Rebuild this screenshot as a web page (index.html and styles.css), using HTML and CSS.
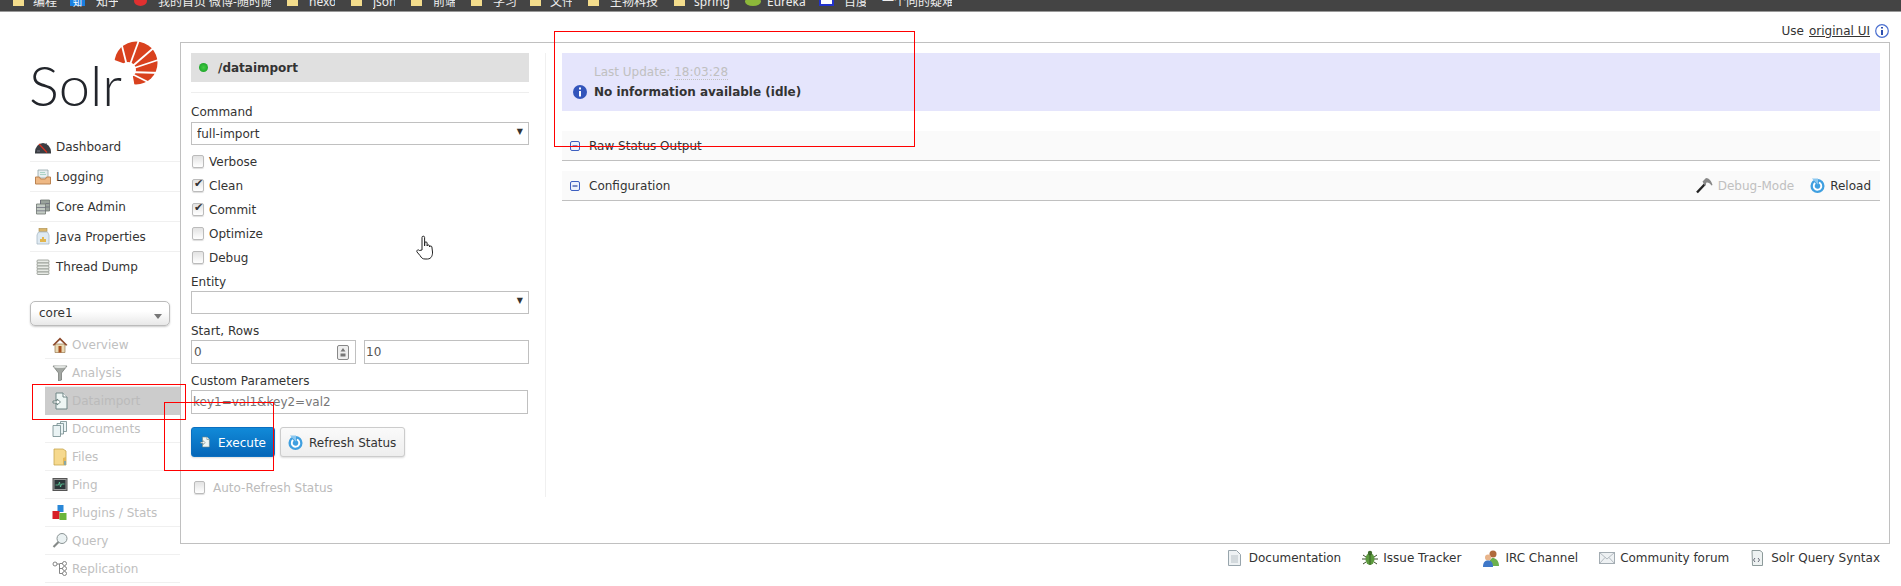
FILE: index.html
```html
<!DOCTYPE html>
<html lang="en">
<head>
    <meta charset="UTF-8">
    <meta name="viewport" content="width=device-width, initial-scale=1.0">
    <title>Solr Admin</title>
    <link rel="stylesheet" href="styles.css">
</head>

<body>
    <svg class="defs" width="0" height="0">
        <symbol id="i-import" viewBox="0 0 16 18">
            <path d="M4 1h7l4 4v12H4z" fill="#eef6f4" stroke="#6f8585"/>
            <path d="M11 1v4h4" fill="#fff" stroke="#6f8585"/>
            <path d="M1 9h4V7l3.500 3L5 13v-2H1z" fill="#fff" stroke="#55706c" stroke-width=".8"/>
        </symbol>
        <symbol id="i-refresh" viewBox="0 0 16 16">
            <circle cx="8" cy="8.500" r="7.500" fill="#3f9fe0"/>
            <path d="M9.500 4.800a4 4 0 1 1-4 .6" fill="none" stroke="#fff" stroke-width="2"/>
            <path d="M2 0.500h6.500v6.500z" fill="#8cc8f0"/>
        </symbol>
        <symbol id="i-minus" viewBox="0 0 10 10">
            <rect x=".5" y=".5" width="9" height="9" rx="1.500" fill="#eef2fc" stroke="#3d5fc0"/>
            <path d="M2.500 5h5" stroke="#2a46a0" stroke-width="1.200"/>
        </symbol>
    </svg>

    <div class="bookmarks">
        <div class="bookmarks-row">
            <span class="folder"></span><span class="bm w26 tight near">编程</span>
            <span class="zhi">知</span><span class="bm w22">知乎</span>
            <span class="weibo"></span><span class="bm w113">我的首页 微博-随时随地</span>
            <span class="folder"></span><span class="bm w26">hexo</span>
            <span class="folder"></span><span class="bm w22">json</span>
            <span class="folder"></span><span class="bm w22">前端</span>
            <span class="folder"></span><span class="bm w26 near">学习</span>
            <span class="folder"></span><span class="bm w22 tight">文件</span>
            <span class="folder"></span><span class="bm w48">生物科技</span>
            <span class="folder"></span><span class="bm w45 tight near">spring</span>
            <span class="leaf"></span><span class="bm w45 near">Eureka</span>
            <span class="baidu"></span><span class="bm w22">百度</span>
            <span class="bm w70 flush">一个向的疑难题</span>
        </div>
    </div>

    <div class="page">
        <aside class="sidebar">
            <svg class="logo" width="130" height="64" viewBox="0 0 130 64">
                <circle cx="105" cy="21" r="21.500" fill="#d9411e"/>
                <path d="M78 16L100 24L104 46L86 50z" fill="#fff"/>
                <g stroke="#fff" stroke-width="1.800">
                    <path d="M97 28L90 0"/>
                    <path d="M97 28L108 -2"/>
                    <path d="M97 28L126 3"/>
                    <path d="M97 28L130 17"/>
                    <path d="M97 30L130 31"/>
                    <path d="M97 30L125 44"/>
                </g>
                <circle cx="97" cy="28" r="8" fill="#fff"/>
                <text class="logo-text" x="-2" y="64">Solr</text>
            </svg>

            <ul class="nav">
                <li>
                    <svg width="16" height="14" viewBox="0 0 16 14"><path d="M0 12a8 9 0 0 1 16 0v1.500H0z" fill="#3a3d42"/><path d="M4 4l8 8.500" stroke="#d83020" stroke-width="1.200"/><path d="M2 11h3M11 4l1-1" stroke="#889" stroke-width=".8"/></svg>
                    Dashboard
                </li>
                <li>
                    <svg width="16" height="16" viewBox="0 0 16 16"><path d="M3 1h10v8H3z" fill="#e6eef0" stroke="#93a4a8" stroke-width=".8"/><path d="M5 3.500h5M5 5.500h6" stroke="#9cb" stroke-width=".8"/><path d="M.5 8h4l1 2h5l1-2h4v7H.5z" fill="#eeb884" stroke="#bb8350"/></svg>
                    Logging
                </li>
                <li>
                    <svg width="15" height="16" viewBox="0 0 15 16"><path d="M5 1h9v11H5z" fill="#9aa39c" stroke="#6d756f" stroke-width=".8"/><path d="M1 5h9v10H1z" fill="#c3cbc4" stroke="#6d756f" stroke-width=".8"/><path d="M1 8.500h9M1 11.800h9M5 1v4M10 4.500h4M10 8h4" stroke="#667" stroke-width=".7"/></svg>
                    Core Admin
                </li>
                <li>
                    <svg width="14" height="17" viewBox="0 0 14 17"><rect x="3" y=".5" width="8" height="3" fill="#d9b56a" stroke="#a98945" stroke-width=".6"/><path d="M2.500 4h9L13 7v9H1V7z" fill="#dfeaf2" stroke="#a8bac6" stroke-width=".8"/><path d="M4 14v-3h2V9h2v2h2v3z" fill="#e2b64f"/></svg>
                    Java Properties
                </li>
                <li>
                    <svg width="14" height="16" viewBox="0 0 14 16"><g fill="#e8ebe6" stroke="#8d938c" stroke-width=".8"><rect x="1" y="1" width="12" height="3" rx="1"/><rect x="1" y="4" width="12" height="3" rx="1"/><rect x="1" y="7" width="12" height="3" rx="1"/><rect x="1" y="10" width="12" height="3" rx="1"/><rect x="1" y="13" width="12" height="2.500" rx="1"/></g></svg>
                    Thread Dump
                </li>
            </ul>

            <div class="core-select">core1<span class="core-arrow"></span></div>

            <ul class="subnav">
                <li>
                    <svg width="16" height="16" viewBox="0 0 16 16"><path d="M3 7h10v8.500H3z" fill="#e9d9b4" stroke="#9a7a50" stroke-width=".7"/><path d="M8 .5L.5 8l1.500 .8L8 3l6 5.800 1.500-.8z" fill="#8c4a2c"/><rect x="6.500" y="9" width="3" height="6.500" fill="#a8501f"/></svg>
                    Overview
                </li>
                <li>
                    <svg width="15" height="16" viewBox="0 0 15 16"><path d="M.5 1h14L9 8v7l-3 1V8z" fill="#a2a6a2" stroke="#6e726e" stroke-width=".7"/><ellipse cx="7.500" cy="1.800" rx="6.500" ry="1.200" fill="#dfe2df"/></svg>
                    Analysis
                </li>
                <li class="active">
                    <svg width="15" height="18"><use href="#i-import"/></svg>
                    Dataimport
                </li>
                <li>
                    <svg width="15" height="16" viewBox="0 0 15 16"><g fill="#eaf3f4" stroke="#71898c" stroke-width=".8"><path d="M8 .5h6v10H8z"/><path d="M4.500 2.500h6.500v10.500H4.500z"/><path d="M.5 4.500h7.500v11H.5z"/></g></svg>
                    Documents
                </li>
                <li>
                    <svg width="14" height="18" viewBox="0 0 14 18"><path d="M1 1h9l3 2v14H1z" fill="#f6d98e" stroke="#c7a64f" stroke-width=".8"/><path d="M10 10l3-1v8h-3z" fill="#e2b85a"/><path d="M12 13v4" stroke="#4d9bd6" stroke-width="1.200"/></svg>
                    Files
                </li>
                <li>
                    <svg width="15" height="13" viewBox="0 0 15 13"><rect x=".5" y=".5" width="14" height="12" fill="#999" stroke="#555"/><rect x="2" y="2" width="11" height="9" fill="#2b3538"/><path d="M3 7h3l1-3 1 5 1-3h3" fill="none" stroke="#5fd0a0" stroke-width=".8"/></svg>
                    Ping
                </li>
                <li>
                    <svg width="15" height="16" viewBox="0 0 15 16"><rect x="5" y="0" width="6" height="7" fill="#2a88d8"/><rect x="0" y="6" width="7" height="8" fill="#d82028"/><rect x="7" y="8" width="7" height="7" fill="#6ab53a"/></svg>
                    Plugins / Stats
                </li>
                <li>
                    <svg width="15" height="16" viewBox="0 0 15 16"><circle cx="9.500" cy="5.500" r="5" fill="#eaf1f2" stroke="#8a9394"/><path d="M6 9l-5 5" stroke="#858a88" stroke-width="2.200"/></svg>
                    Query
                </li>
                <li>
                    <svg width="15" height="15" viewBox="0 0 15 15"><g fill="#fff" stroke="#777" stroke-width=".9"><circle cx="2.500" cy="3" r="2"/><circle cx="12" cy="2.500" r="2"/><circle cx="12" cy="7.500" r="2"/><circle cx="12" cy="12.500" r="2"/></g><path d="M4.500 3h2.500v9.500h3M7 2.500h3M7 7.500h3" fill="none" stroke="#777" stroke-width=".9"/></svg>
                    Replication
                </li>
            </ul>
        </aside>

        <div class="content">
            <div class="ui-switch">
                Use <a href="#" class="ui-link">original UI</a>
                <svg width="14" height="14" viewBox="0 0 14 14"><circle cx="7" cy="7" r="6.300" fill="#fff" stroke="#4a6fd0" stroke-width="1.200"/><path d="M7 3v1.500M7 6v5" stroke="#2d4fae" stroke-width="2"/></svg>
            </div>

            <main class="frame">
                <form class="import-form">
                    <div class="handler"><span class="dot"></span>/dataimport</div>

                    <label class="field-label first">Command</label>
                    <div class="select-box"><select class="select"><option>full-import</option></select></div>

                    <div class="checks">
                        <label class="check"><input type="checkbox">Verbose</label>
                        <label class="check"><input type="checkbox" checked>Clean</label>
                        <label class="check"><input type="checkbox" checked>Commit</label>
                        <label class="check"><input type="checkbox">Optimize</label>
                        <label class="check"><input type="checkbox">Debug</label>
                    </div>

                    <label class="field-label entity">Entity</label>
                    <div class="select-box"><select class="select"><option></option></select></div>

                    <label class="field-label">Start, Rows</label>
                    <div class="start-rows">
                        <div class="num-field">
                            <input class="bare-input" type="text" value="0">
                            <svg width="12" height="15" viewBox="0 0 12 15"><rect x=".5" y=".5" width="11" height="14" rx="1.500" fill="#eee" stroke="#888"/><path d="M6 3l2.500 3.500h-5zM3.500 8.500h5v3h-5z" fill="#777"/></svg>
                        </div>
                        <input class="text-input" type="text" value="10">
                    </div>

                    <label class="field-label">Custom Parameters</label>
                    <input class="text-input params" type="text" placeholder="key1=val1&amp;key2=val2">

                    <div class="actions">
                        <button type="button" class="btn btn-primary">
                            <svg width="15" height="18"><use href="#i-import"/></svg>
                            <span class="btn-text">Execute</span>
                        </button>
                        <button type="button" class="btn">
                            <svg width="15" height="15"><use href="#i-refresh"/></svg>
                            <span class="btn-text">Refresh Status</span>
                        </button>
                    </div>

                    <label class="check auto"><input type="checkbox">Auto-Refresh Status</label>
                </form>

                <section class="results">
                    <div class="status">
                        <div class="status-time">Last Update: <span class="time">18:03:28</span></div>
                        <div class="status-msg">
                            <svg width="14" height="14" viewBox="0 0 14 14"><circle cx="7" cy="7" r="7" fill="#3355bb"/><path d="M7 2.500v2M7 6v5.500" stroke="#fff" stroke-width="2"/></svg>
                            No information available (idle)
                        </div>
                    </div>

                    <div class="block-head">
                        <svg width="10" height="10"><use href="#i-minus"/></svg>
                        Raw Status Output
                    </div>
                    <div class="block-head">
                        <svg width="10" height="10"><use href="#i-minus"/></svg>
                        Configuration
                        <span class="tools">
                            <span class="tool dim">
                                <svg width="17" height="17" viewBox="0 0 17 17"><path d="M1 15.500L9 7" stroke="#222" stroke-width="2.400"/><path d="M6.500 4.500L10 1c3 0 5.500 3 6.500 7l-1 .5C14 6 12 5 10.500 5.500L9 9z" fill="#888"/></svg>
                                Debug-Mode
                            </span>
                            <span class="tool">
                                <svg width="15" height="15"><use href="#i-refresh"/></svg>
                                Reload
                            </span>
                        </span>
                    </div>
                </section>
            </main>

            <footer class="links">
                <span class="link wide">
                    <svg width="13" height="16" viewBox="0 0 13 16"><path d="M.5.5h8l4 4v11H.5z" fill="#eef2f4" stroke="#98a5ac"/><path d="M3 6h7M3 8h7M3 10h7M3 12h7" stroke="#aab5bb" stroke-width=".8"/></svg>
                    Documentation
                </span>
                <span class="link">
                    <svg width="16" height="16" viewBox="0 0 16 16"><path d="M1 5l3 2M15 5l-3 2M0 9h4M16 9h-4M1 14l3-2M15 14l-3-2" stroke="#3b4a2c"/><ellipse cx="8" cy="9" rx="4.500" ry="6" fill="#5c9a3e"/><circle cx="8" cy="3" r="2.200" fill="#3f6b2c"/><path d="M8 4v11" stroke="#2f5220" stroke-width=".8"/></svg>
                    Issue Tracker
                </span>
                <span class="link">
                    <svg width="18" height="17" viewBox="0 0 18 17"><circle cx="11" cy="4" r="3.500" fill="#b06a3c"/><path d="M7 16c0-6 2-8 4-8s6 2 6 8z" fill="#6cb04e"/><circle cx="6" cy="7.500" r="3" fill="#e8b48a"/><path d="M1 17c0-5 2-6.500 5-6.500s5 1.500 5 6.500z" fill="#3f78c8"/></svg>
                    IRC Channel
                </span>
                <span class="link">
                    <svg width="16" height="12" viewBox="0 0 16 12"><rect x=".5" y=".5" width="15" height="11" fill="#eef1f3" stroke="#a3acb2"/><path d="M.5.5L8 7l7.500-6.500M.5 11.500L6 5.500M15.500 11.500L10 5.500" fill="none" stroke="#a3acb2" stroke-width=".8"/></svg>
                    Community forum
                </span>
                <span class="link wide">
                    <svg width="13" height="16" viewBox="0 0 13 16"><path d="M2 .5h8l2.500 2v13h-10z" fill="#eef2f2" stroke="#8d9a9a"/><path d="M5 8L3.500 10 5 12M8 8l1.500 2L8 12" fill="none" stroke="#445" stroke-width=".8"/></svg>
                    Solr Query Syntax
                </span>
            </footer>
        </div>
    </div>

    <!-- marks drawn over the screenshot -->
    <div class="mark mark-status"></div>
    <div class="mark mark-nav"></div>
    <div class="mark mark-exec"></div>

    <svg class="hand" width="19" height="25" viewBox="0 0 19 25">
        <path d="M6 15V2.500a1.200 1.200 0 0 1 2.600 0V11l.1-3c0-1.500 2.400-1.500 2.400 0v3c0-1.500 2.400-1.500 2.400 0v1c0-1.300 2.400-1.300 2.400 0l.6 5c.2 3-1 7-5 7H9c-2.500 0-3.500-1-5-3.500L1 17c-.8-1.500 1-3 2.500-1.500z" fill="#fff" stroke="#222" stroke-width="1"/>
    </svg>
</body>
</html>
```

FILE: styles.css
```css
body {
    margin: 0;
    height: 586px;
    overflow: hidden;
    background-color: #fff;
    color: #333;
    font-family: "DejaVu Sans", Verdana, sans-serif;
    font-size: 12px;
}

ul {
    list-style: none;
    margin: 0;
    padding: 0;
}

.defs {
    display: block;
    height: 0;
}

/* browser bookmarks, cut off at the top */
.bookmarks {
    height: 11px;
    overflow: hidden;
    background-color: #444;
    border-bottom: 1px solid #999;
}

.bookmarks-row {
    display: flex;
    align-items: center;
    height: 16px;
    margin-top: -7px;
    padding-left: 13px;
    color: #eee;
    font-family: "Noto Sans", "Noto Sans CJK SC", sans-serif;
    font-size: 12px;
    white-space: nowrap;
}

.bm {
    flex: none;
    margin-left: 11px;
    margin-right: 16px;
    overflow: hidden;
}

.w22 { width: 22px; }
.w26 { width: 26px; }
.w45 { width: 45px; }
.w48 { width: 48px; }
.w70 { width: 70px; }
.w113 { width: 113px; }

.tight { margin-left: 9px; }
.near { margin-right: 11px; }
.flush { margin-left: 0; }

.folder {
    flex: none;
    width: 11px;
    height: 9px;
    background-color: #f3dc8c;
}

.zhi {
    flex: none;
    width: 15px;
    height: 10px;
    background-color: #1a7fe0;
    color: #fff;
    font-size: 9px;
    text-align: center;
}

.weibo {
    flex: none;
    width: 13px;
    height: 10px;
    border-radius: 50%;
    background-color: #e03030;
}

.leaf {
    flex: none;
    width: 16px;
    height: 9px;
    margin-left: -5px;
    margin-right: -5px;
    border-radius: 50%;
    background-color: #8db83a;
}

.baidu {
    flex: none;
    box-sizing: border-box;
    width: 15px;
    height: 10px;
    margin-left: -4px;
    margin-right: -1px;
    background-color: #fff;
    border: 2px solid #2233cc;
}

.page {
    display: flex;
}

/* left column */
.sidebar {
    flex: none;
    width: 180px;
    padding-top: 30px;
}

.logo {
    display: block;
    margin-left: 31px;
    overflow: visible;
}

.logo-text {
    font-family: Lato, Roboto, sans-serif;
    font-weight: 300;
    font-size: 56px;
    fill: #22252b;
}

.nav {
    margin: 26px 0 0 30px;
}

.nav li {
    display: flex;
    align-items: center;
    height: 29px;
    border-bottom: 1px solid #f0f0f0;
    color: #333;
}

.nav li:last-child {
    border-bottom: none;
}

.nav svg {
    flex: none;
    width: 16px;
    margin: 0 5px 0 5px;
}

.core-select {
    position: relative;
    box-sizing: border-box;
    width: 140px;
    height: 25px;
    margin: 20px 0 0 30px;
    padding: 4px 8px;
    border: 1px solid #bbb;
    border-radius: 5px;
    background-image: linear-gradient(#fff, #fff 40%, #e8e8e8);
    box-shadow: 0 1px 2px #ccc;
}

.core-arrow {
    position: absolute;
    right: 7px;
    top: 12px;
    border-left: 4px solid transparent;
    border-right: 4px solid transparent;
    border-top: 5px solid #777;
}

.subnav {
    margin: 5px 0 0 45px;
}

.subnav li {
    display: flex;
    align-items: center;
    height: 27px;
    border-bottom: 1px solid #f0f0f0;
    color: #c0c0c0;
}

.subnav svg {
    flex: none;
    width: 16px;
    margin: 0 4px 0 7px;
}

.subnav .active {
    background-color: #ccc;
    border-bottom-color: #ccc;
    color: #bbb;
}

/* right column */
.content {
    flex: 1;
    min-width: 0;
    padding-right: 11px;
}

.ui-switch {
    display: flex;
    justify-content: flex-end;
    align-items: center;
    gap: 5px;
    box-sizing: border-box;
    height: 30px;
    padding-top: 8px;
    padding-right: 2px;
    margin-right: -1px;
}

.ui-link {
    color: #333;
}

.frame {
    display: flex;
    box-sizing: border-box;
    height: 502px;
    padding: 10px 9px 0 10px;
    border: 1px solid #c0c0c0;
}

.import-form {
    flex: none;
    box-sizing: border-box;
    width: 355px;
    height: 444px;
    padding-right: 16px;
    border-right: 1px solid #f0f0f0;
}

.handler {
    display: flex;
    align-items: center;
    height: 29px;
    margin-bottom: 10px;
    background-color: #e0e0e0;
    font-weight: bold;
}

.dot {
    width: 9px;
    height: 9px;
    margin: 0 10px 0 8px;
    border-radius: 50%;
    background-image: radial-gradient(#44cc44, #119922);
}

.field-label {
    display: block;
    height: 16px;
    line-height: 16px;
    margin-top: 9px;
    margin-bottom: 1px;
}

.field-label.first {
    box-sizing: border-box;
    height: 28px;
    margin-top: 0;
    margin-bottom: 2px;
    padding-top: 11px;
    border-top: 1px solid #eee;
}

.field-label.entity {
    margin-top: 5px;
}

.select-box {
    position: relative;
}

.select-box::after {
    content: "▼";
    position: absolute;
    right: 6px;
    top: 5px;
    font-size: 8px;
    color: #333;
}

.select {
    appearance: none;
    display: block;
    box-sizing: border-box;
    width: 100%;
    height: 23px;
    padding: 0 5px;
    border: 1px solid #c0c0c0;
    background-color: #fff;
    color: #333;
    font: inherit;
}

.checks {
    margin-top: 4px;
}

.check {
    display: flex;
    align-items: center;
    box-sizing: border-box;
    height: 24px;
    padding-top: 2px;
}

.check input {
    appearance: none;
    position: relative;
    box-sizing: border-box;
    width: 12px;
    height: 13px;
    margin: 0 5px 2px 1px;
    border: 1px solid #bbb;
    border-radius: 2px;
    background-image: linear-gradient(#e2e2e2, #fff);
    box-shadow: 0 1px 1px #ddd;
}

.check input:checked::after {
    content: "✔";
    position: absolute;
    left: 1px;
    top: -3px;
    font-size: 11px;
    color: #333;
}

.start-rows {
    display: flex;
    gap: 8px;
}

.text-input {
    box-sizing: border-box;
    height: 24px;
    min-width: 0;
    flex: 1;
    padding: 0 1px;
    border: 1px solid #c0c0c0;
    color: #555;
    font: inherit;
}

.text-input::placeholder {
    color: #777;
}

.params {
    display: block;
    width: 337px;
}

.num-field {
    display: flex;
    align-items: center;
    box-sizing: border-box;
    flex: none;
    width: 165px;
    height: 24px;
    padding-right: 6px;
    border: 1px solid #c0c0c0;
}

.bare-input {
    flex: 1;
    min-width: 0;
    padding: 0 2px;
    border: none;
    color: #555;
    font: inherit;
}

.actions {
    display: flex;
    gap: 5px;
    margin-top: 13px;
}

.btn {
    display: flex;
    align-items: center;
    gap: 6px;
    box-sizing: border-box;
    height: 30px;
    padding: 0 8px 0 7px;
    border: 1px solid #ccc;
    border-radius: 3px;
    background-image: linear-gradient(#fafafa, #eee);
    box-shadow: 0 1px 2px #ddd;
    color: #333;
    font: inherit;
}

.btn-text {
    padding-top: 2px;
}

.btn-primary {
    gap: 8px;
    width: 84px;
    padding-left: 8px;
    border-color: #0b6fc0;
    background-image: linear-gradient(#118ad8, #0566b8);
    color: #fff;
}

.auto {
    margin-top: 18px;
    color: #bbb;
}

.auto input {
    width: 11px;
    margin: 0 8px 2px 3px;
}

.results {
    flex: 1;
    min-width: 0;
    margin-left: 16px;
}

.status {
    box-sizing: border-box;
    height: 58px;
    margin-bottom: 20px;
    padding: 11px 0 0 11px;
    background-color: #e5e5fc;
}

.status-time {
    height: 16px;
    line-height: 16px;
    margin-bottom: 4px;
    padding-left: 21px;
    color: #c0c0c0;
}

.time {
    border-bottom: 1px dotted #c0c0c0;
}

.status-msg {
    display: flex;
    align-items: center;
    gap: 7px;
    height: 16px;
    font-weight: bold;
}

.block-head {
    display: flex;
    align-items: center;
    gap: 9px;
    box-sizing: border-box;
    height: 30px;
    margin-bottom: 10px;
    padding-left: 8px;
    background-color: #fafafa;
    border-bottom: 1px solid #c0c0c0;
}

.tools {
    display: flex;
    gap: 16px;
    margin-left: auto;
    padding-right: 9px;
}

.tool {
    display: flex;
    align-items: center;
    gap: 5px;
}

.dim {
    color: #c0c0c0;
}

.links {
    display: flex;
    justify-content: flex-end;
    align-items: center;
    gap: 21px;
    height: 28px;
    padding-right: 10px;
}

.link {
    display: flex;
    align-items: center;
    gap: 5px;
}

.link.wide {
    gap: 8px;
}

/* red boxes */
.mark {
    position: absolute;
    box-sizing: border-box;
    border: 1px solid #f00;
    pointer-events: none;
}

.mark-status { left: 554px; top: 31px; width: 361px; height: 116px; }
.mark-nav { left: 32px; top: 384px; width: 154px; height: 36px; }
.mark-exec { left: 164px; top: 402px; width: 110px; height: 69px; }

.hand {
    position: absolute;
    left: 416px;
    top: 235px;
}
```
